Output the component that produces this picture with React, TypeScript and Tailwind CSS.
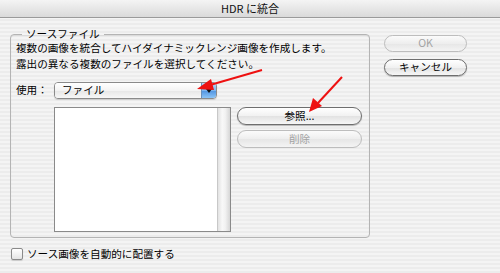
import React from "react";

const font = { fontFamily: '"Noto Sans CJK JP", "Noto Sans", sans-serif' };

function AquaButton({
  label,
  disabled,
  className,
}: {
  label: string;
  disabled?: boolean;
  className: string;
}) {
  return (
    <div
      className={
        "flex items-center justify-center rounded-full border text-[10.6px] leading-none " +
        (disabled
          ? "border-[#bdbdbd] text-[#a3a3a3] bg-[linear-gradient(#fbfbfb,#eeeeee_50%,#e6e6e6_51%,#f4f4f4)]"
          : "border-[#6e6e6e] text-[#000] bg-[linear-gradient(#ffffff,#f1f1f1_50%,#e2e2e2_51%,#f6f6f6)] shadow-[0_1px_1px_rgba(0,0,0,0.25)]") +
        " " +
        className
      }
    >
      {label}
    </div>
  );
}

export default function App() {
  return (
    <div
      className="relative w-[500px] h-[273px] overflow-hidden bg-[repeating-linear-gradient(0deg,#ececec_0px,#ececec_2px,#f4f4f4_2px,#f4f4f4_4px)] text-[#000]"
      style={font}
    >
      {/* title bar */}
      <div className="h-[18px] flex items-center justify-center border-b border-[#9a9a9a] bg-[linear-gradient(#f4f4f4,#dadada)] text-[11px] text-[#111] leading-none">
        HDR に統合
      </div>

      <div className="flex pl-[10px]">
        <fieldset className="mt-[9px] w-[360px] h-[211px] border border-[#b4b4b4] rounded-[4px] pl-[5px] pr-[6px] pb-[6px] shadow-[inset_0_1px_1px_rgba(0,0,0,0.08)]">
          <legend className="ml-[6px] px-[4px] text-[10.6px] leading-[14px]">ソースファイル</legend>
          <div className="text-[10.6px] leading-[16px] mt-[-1px]">
            <div>複数の画像を統合してハイダイナミックレンジ画像を作成します。</div>
            <div>露出の異なる複数のファイルを選択してください。</div>
          </div>
          <div className="flex items-center mt-[10px]">
            <div className="w-[38px] text-[10.6px] leading-none">使用：</div>
            <div className="flex h-[17px] w-[163px] rounded-[4px] border border-[#8a8a8a] overflow-hidden shadow-[0_1px_1px_rgba(0,0,0,0.15)]">
              <div className="flex-1 flex items-center pl-[7px] text-[10.6px] leading-none bg-[linear-gradient(#ffffff,#f3f3f3_50%,#e6e6e6_51%,#f7f7f7)]">
                ファイル
              </div>
              <div className="w-[15px] flex items-center justify-center bg-[linear-gradient(#b8d8f8,#7fb6ee_50%,#4f93e0_51%,#8cc4f6)] border-l border-[#6b8fb8]">
                <svg width="6" height="4" viewBox="0 0 6 4">
                  <path d="M0 0 L6 0 L3 4 Z" fill="#111" />
                </svg>
              </div>
            </div>
          </div>
          <div className="flex mt-[8px]">
            <div className="ml-[38px] flex w-[177px] h-[125px] border border-[#8a8a8a] bg-white">
              <div className="flex-1" />
              <div className="w-[13px] border-l border-[#c8c8c8] bg-[linear-gradient(90deg,#e2e2e2,#f8f8f8_35%,#f2f2f2_60%,#d6d6d6)]" />
            </div>
            <div className="ml-[6px] flex flex-col gap-[5px]">
              <AquaButton label="参照..." className="w-[125px] h-[18px]" />
              <AquaButton label="削除" disabled className="w-[125px] h-[18px]" />
            </div>
          </div>
        </fieldset>

        <div className="ml-[14px] mt-[17px] flex flex-col gap-[7px]">
          <AquaButton label="OK" disabled className="w-[83px] h-[17px]" />
          <AquaButton label="キャンセル" className="w-[83px] h-[17px]" />
        </div>
      </div>

      <div className="flex items-center pl-[11px] mt-[10px]">
        <div className="w-[12px] h-[12px] rounded-[2px] border border-[#8a8a8a] bg-[linear-gradient(#ffffff,#e4e4e4)] shadow-[0_1px_1px_rgba(0,0,0,0.15)]" />
        <div className="ml-[4px] text-[10.6px] leading-none">ソース画像を自動的に配置する</div>
      </div>

      {/* red annotation arrows */}
      <svg className="absolute left-0 top-0" width="500" height="273" viewBox="0 0 500 273">
        <line x1="262" y1="70" x2="210" y2="85" stroke="#ee1111" strokeWidth="2" />
        <path d="M197 89 L211 79 L214 90 Z" fill="#ee1111" />
        <line x1="342" y1="77" x2="318" y2="103" stroke="#ee1111" strokeWidth="2" />
        <path d="M309 112 L313 98 L322 106 Z" fill="#ee1111" />
      </svg>
    </div>
  );
}
